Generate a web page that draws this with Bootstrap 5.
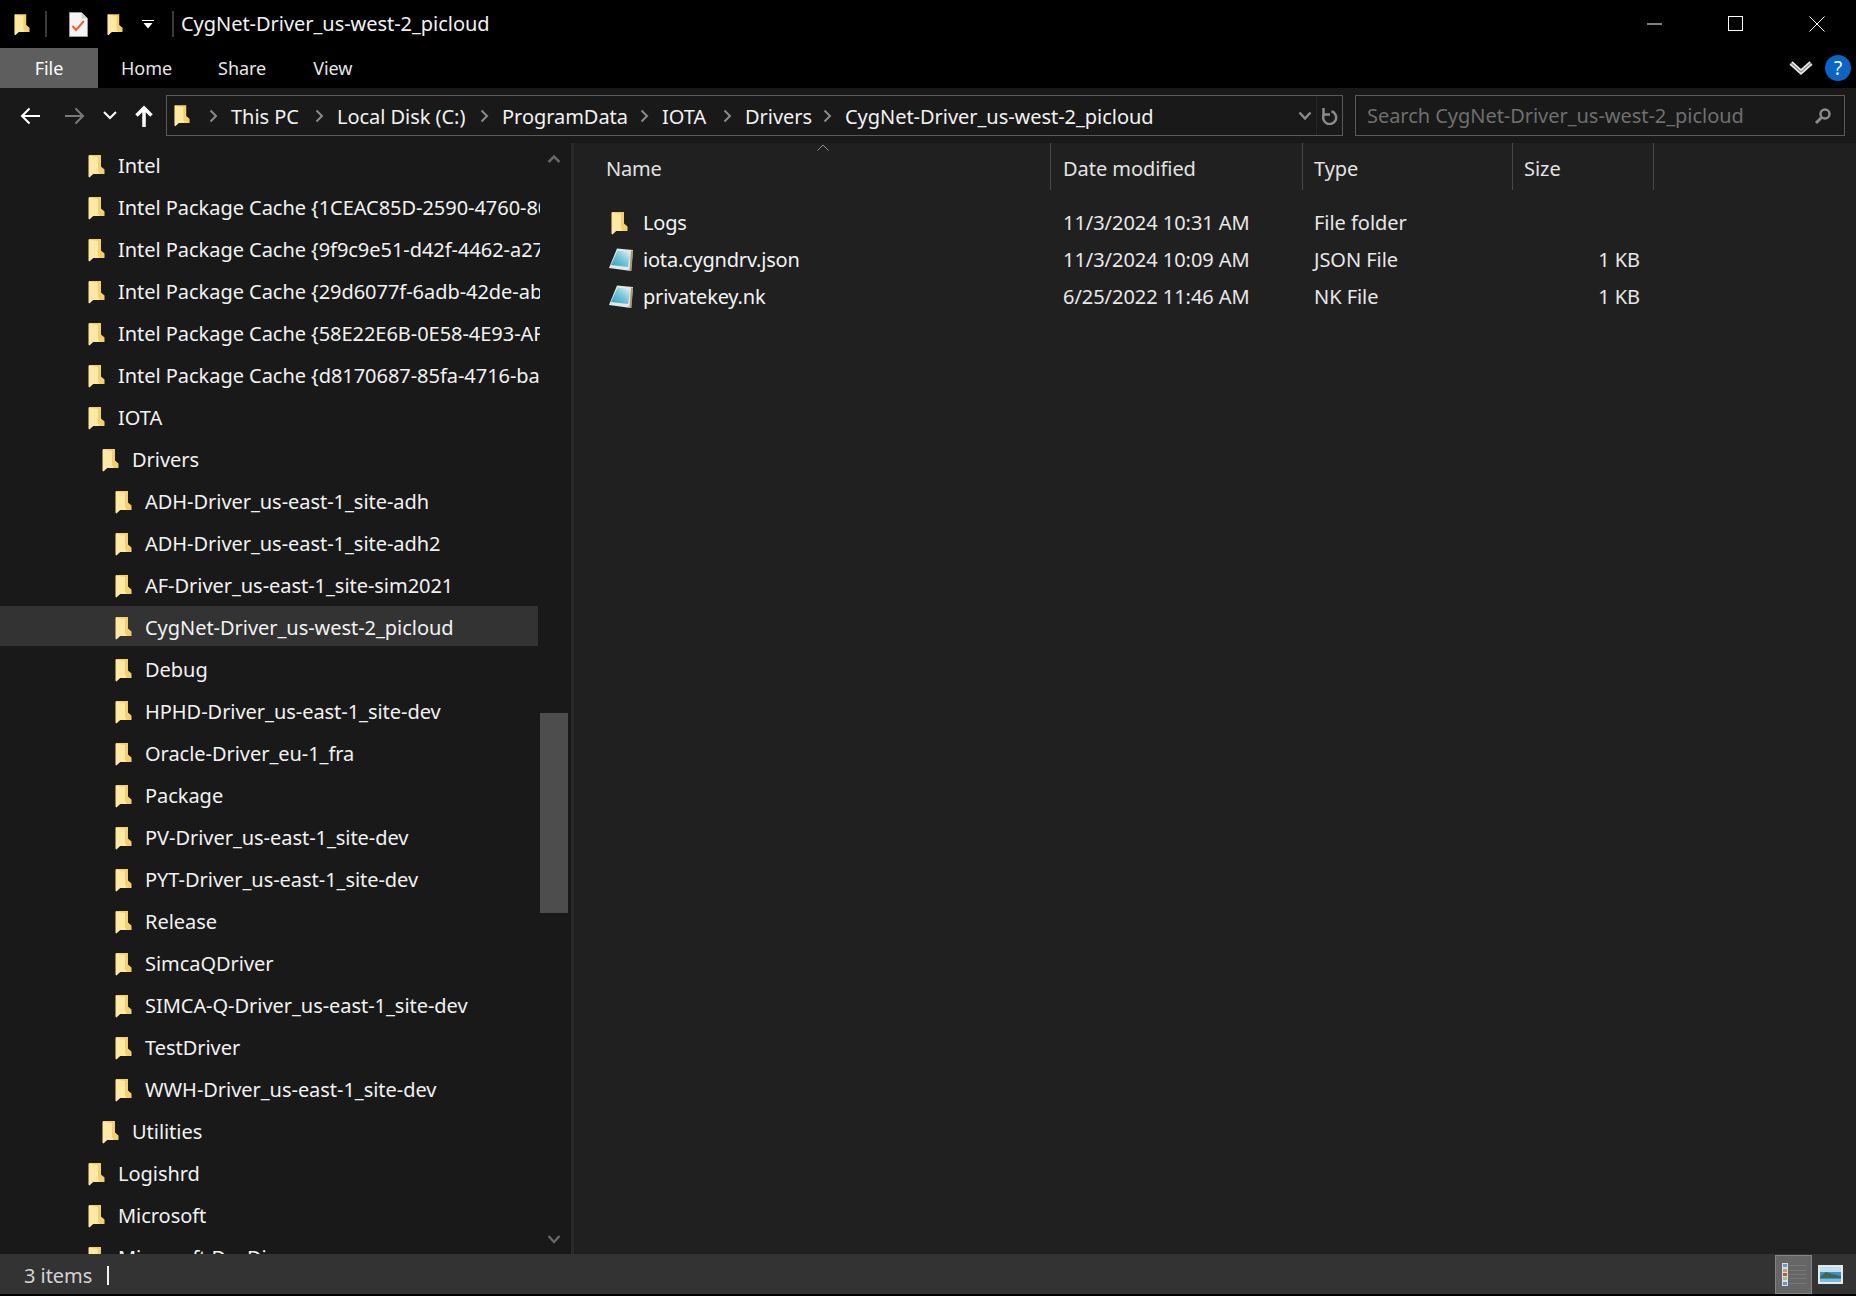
<!DOCTYPE html>
<html lang="en">
<head>
  <meta charset="UTF-8">
  <title>CygNet-Driver_us-west-2_picloud</title>
  <link href="https://cdn.jsdelivr.net/npm/bootstrap@5.3.0/dist/css/bootstrap.min.css" rel="stylesheet">
  <style>
    html, body { height: 100%; background: #000; }
    body { font-family: "Noto Sans", "Open Sans", sans-serif; font-size: 20px; letter-spacing: -0.04px; color: #f2f2f2; overflow: hidden; line-height: 1.2; }
    .win { height: 1294px; }

    /* title bar */
    .title-bar { height: 48px; background: #000; }
    .qa-sep { width: 2px; height: 26px; background: #3a3a3a; }
    .qa-folder { margin-left: 14px; }
    .qa-sep-a { margin-left: 15px; }
    .qa-doc { margin-left: 22px; }
    .qa-folder2 { margin-left: 19px; }
    .qa-drop { margin-left: 19px; }
    .qa-sep-b { margin-left: 18px; }
    .title-text { margin-left: 7px; }
    .win-btn { width: 81px; height: 48px; padding-left: 2px; }

    /* ribbon tabs */
    .tab-bar { height: 40px; background: #000; }
    .rib-tab { height: 40px; padding: 1px 23px 0; font-size: 18px; color: #e6e6e6; }
    .rib-tab.is-file { width: 98px; padding: 1px 0 0; justify-content: center; background: #5e5e5e; color: #fff; }
    .rib-tab.is-view { padding-left: 24px; }
    .help-btn { width: 26px; height: 26px; background: #0c64c4; color: #fff; margin: 0 5px 0 12px; font-size: 19px; }

    /* address row */
    .addr-bar { height: 55px; background: #191919; padding-top: 7px; }
    .nav-btns { width: 166px; height: 41px; }
    .nb-back { margin-left: 20px; }
    .nb-fwd { margin-left: 25px; }
    .nb-drop { margin-left: 18px; }
    .nb-up { margin-left: 18px; }
    .addr-box { width: 1177px; height: 41px; border: 1px solid #5a5a5a; }
    .addr-folder { margin: 0 17px 0 7px; }
    .crumb-sep { width: 9px; margin: 0 13px 0 2px; flex: none; }
    .crumb-txt { white-space: nowrap; color: #f2f2f2; padding-top: 2px; }
    .cr-1 { flex: 0 0 106px; }
    .cr-2 { flex: 0 0 165px; }
    .cr-3 { flex: 0 0 160px; }
    .cr-4 { flex: 0 0 83px; }
    .cr-5 { flex: 0 0 100px; }
    .addr-drop { width: 24px; height: 100%; border-right: 1px solid #252525; }
    .addr-refresh { width: 25px; }
    .search-box { width: 490px; height: 41px; margin-left: 12px; border: 1px solid #5a5a5a; padding: 0 12px 0 11px; color: #6f6f6f; }
    .search-txt { padding-top: 1px; }

    /* tree pane */
    .main-area { height: 1111px; }
    .tree-pane { width: 574px; flex: none; background: #191919; border-right: 3px solid #2a2a2a; }
    .tree-list { width: 540px; padding-top: 1px; gap: 2px; }
    .tree-row { height: 40px; flex: none; white-space: nowrap; overflow: hidden; padding-top: 4px; }
    .tree-row.is-sel { background: #333; margin-right: 2px; }
    .tree-row svg { flex: none; margin-right: 13px; }
    .lvl-0 { padding-left: 88px; }
    .lvl-1 { padding-left: 102px; }
    .lvl-2 { padding-left: 115px; }
    .scroll-col { width: 28px; }
    .scroll-up { top: 11px; }
    .scroll-thumb { height: 200px; margin-top: 570px; background: #4d4d4d; }
    .scroll-end { margin-top: auto; margin-bottom: 8px; }

    /* file list */
    .file-pane { background: #202020; }
    .hcell { height: 47px; border-right: 1px solid #474747; padding-top: 5px; color: #e3e3e3; }
    .c-name { width: 477px; padding-left: 32px; letter-spacing: -0.2px; }
    .c-date { width: 252px; padding-left: 12px; }
    .c-type { width: 210px; padding-left: 11px; }
    .c-size { width: 141px; padding-left: 11px; }
    .sort-mark { top: 1px; left: 243px; }
    .file-rows { margin-top: 14px; }
    .file-row { height: 37px; }
    .file-row .c-size { text-align: right; padding-right: 14px; }
    .file-row > div { color: #e8e8e8; white-space: nowrap; }
    .file-row .c-name { color: #f4f4f4; }
    .fi-folder { margin: 0 15px 0 5px; flex: none; }
    .fi-note { margin: 0 9px 0 2px; flex: none; }

    /* status bar */
    .status-bar { height: 40px; background: #333; padding-left: 24px; color: #d4d4d4; }
    .status-txt { padding-top: 4px; }
    .status-caret { width: 2px; height: 19px; background: #f2f2f2; margin: 2px 0 0 15px; }
    .view-list { width: 37px; height: 39px; background: #666; border: 1px solid #858585; margin-left: auto; }
    .view-pic { width: 44px; padding-left: 6px; }
  </style>
</head>
<body>
<svg width="0" height="0" class="position-absolute">
  <defs>
    <linearGradient id="note-fill" x1="0" y1="1" x2="1" y2="0">
      <stop offset="0" stop-color="#2f9dbd"/>
      <stop offset="0.55" stop-color="#7cc8da"/>
      <stop offset="1" stop-color="#e9f5f8"/>
    </linearGradient>
  </defs>
  <symbol id="ico-folder" viewBox="0 0 17 24">
    <path d="M1 1h12v11.500l3.500 3v4.500H5L1 23z" fill="#f5cf6c"/>
    <path d="M0.500 1.500L10 3v13.500l1.500 3.500H5l-3.500 3.500-1-.8z" fill="#fde8a4"/>
  </symbol>
  <symbol id="ico-note" viewBox="0 0 26 24">
    <path d="M9 .5L25 2 23 23 1 20z" fill="#dfe9ec"/>
    <path d="M9.500 2.500L22.500 4 20 19 3 17z" fill="url(#note-fill)"/>
    <path d="M23 2.500l2 .5-1.500 20-4-1 2-.5z" fill="#a8986a"/>
  </symbol>
</svg>

<div class="win d-flex flex-column">
  <!-- title bar -->
  <div class="title-bar d-flex align-items-center">
    <svg class="qa-folder" width="16" height="23"><use href="#ico-folder"/></svg>
    <span class="qa-sep qa-sep-a"></span>
    <svg class="qa-doc" width="19" height="25" viewBox="0 0 19 25">
      <path d="M0.500 0.500h12l6 6v18h-18z" fill="#f4f4f4" stroke="#9a9a9a"/>
      <path d="M12.500 0.500v6h6z" fill="#cfcfcf"/>
      <path d="M3.500 14l3.500 4 8-9" fill="none" stroke="#e8622c" stroke-width="2"/>
    </svg>
    <svg class="qa-folder2" width="16" height="23"><use href="#ico-folder"/></svg>
    <svg class="qa-drop" width="12" height="9" viewBox="0 0 12 9"><path d="M0 .5h12" stroke="#fff"/><path d="M1.500 3h9L6 8.500z" fill="#fff"/></svg>
    <span class="qa-sep qa-sep-b"></span>
    <span class="title-text">CygNet-Driver_us-west-2_picloud</span>
    <div class="d-flex ms-auto">
      <div class="win-btn d-flex align-items-center justify-content-center"><svg width="16" height="16"><path d="M0 8h15" stroke="#fff"/></svg></div>
      <div class="win-btn d-flex align-items-center justify-content-center"><svg width="16" height="16"><rect x=".5" y=".5" width="14" height="14" fill="none" stroke="#fff"/></svg></div>
      <div class="win-btn d-flex align-items-center justify-content-center"><svg width="16" height="16"><path d="M.5.500l15 15M15.500.500l-15 15" stroke="#fff"/></svg></div>
    </div>
  </div>

  <!-- ribbon tabs -->
  <div class="tab-bar d-flex align-items-center">
    <div class="rib-tab is-file d-flex align-items-center">File</div>
    <div class="rib-tab d-flex align-items-center">Home</div>
    <div class="rib-tab d-flex align-items-center">Share</div>
    <div class="rib-tab is-view d-flex align-items-center">View</div>
    <svg class="ms-auto" width="24" height="16" viewBox="0 0 24 16">
      <path d="M2 3l10 9 10-9" fill="none" stroke="#e8e8e8" stroke-width="4.500"/>
      <path d="M2 3l10 9 10-9" fill="none" stroke="#8d8d8d" stroke-width="1.200"/>
    </svg>
    <div class="help-btn d-flex align-items-center justify-content-center rounded-circle">?</div>
  </div>

  <!-- address row -->
  <div class="addr-bar d-flex">
    <div class="nav-btns d-flex align-items-center">
      <svg class="nb-back" width="20" height="18" viewBox="0 0 20 18"><path d="M20 9H2M9.500 1.500L2 9l7.500 7.500" fill="none" stroke="#fff" stroke-width="2"/></svg>
      <svg class="nb-fwd" width="20" height="18" viewBox="0 0 20 18"><path d="M0 9h18M10.500 1.500L18 9l-7.500 7.500" fill="none" stroke="#7a7a7a" stroke-width="2"/></svg>
      <svg class="nb-drop" width="14" height="9" viewBox="0 0 14 9"><path d="M1 1l6 6 6-6" fill="none" stroke="#fff" stroke-width="2"/></svg>
      <svg class="nb-up" width="18" height="22" viewBox="0 0 18 22"><path d="M9 22V3M1.500 10.500L9 3l7.500 7.500" fill="none" stroke="#fff" stroke-width="3.500"/></svg>
    </div>
    <div class="addr-box d-flex align-items-center">
      <svg class="addr-folder" width="16" height="23"><use href="#ico-folder"/></svg>
      <div class="cr-1 d-flex align-items-center">
        <svg class="crumb-sep" height="14" viewBox="0 0 9 14"><path d="M1.500 1.500L7 7l-5.500 5.500" fill="none" stroke="#8a8a8a" stroke-width="2"/></svg>
        <span class="crumb-txt">This PC</span>
      </div>
      <div class="cr-2 d-flex align-items-center">
        <svg class="crumb-sep" height="14" viewBox="0 0 9 14"><path d="M1.500 1.500L7 7l-5.500 5.500" fill="none" stroke="#8a8a8a" stroke-width="2"/></svg>
        <span class="crumb-txt">Local Disk (C:)</span>
      </div>
      <div class="cr-3 d-flex align-items-center">
        <svg class="crumb-sep" height="14" viewBox="0 0 9 14"><path d="M1.500 1.500L7 7l-5.500 5.500" fill="none" stroke="#8a8a8a" stroke-width="2"/></svg>
        <span class="crumb-txt">ProgramData</span>
      </div>
      <div class="cr-4 d-flex align-items-center">
        <svg class="crumb-sep" height="14" viewBox="0 0 9 14"><path d="M1.500 1.500L7 7l-5.500 5.500" fill="none" stroke="#8a8a8a" stroke-width="2"/></svg>
        <span class="crumb-txt">IOTA</span>
      </div>
      <div class="cr-5 d-flex align-items-center">
        <svg class="crumb-sep" height="14" viewBox="0 0 9 14"><path d="M1.500 1.500L7 7l-5.500 5.500" fill="none" stroke="#8a8a8a" stroke-width="2"/></svg>
        <span class="crumb-txt">Drivers</span>
      </div>
      <div class="d-flex align-items-center">
        <svg class="crumb-sep" height="14" viewBox="0 0 9 14"><path d="M1.500 1.500L7 7l-5.500 5.500" fill="none" stroke="#8a8a8a" stroke-width="2"/></svg>
        <span class="crumb-txt">CygNet-Driver_us-west-2_picloud</span>
      </div>
      <div class="addr-drop d-flex align-items-center justify-content-center ms-auto"><svg width="14" height="10" viewBox="0 0 14 10"><path d="M1.500 1.500L7 7.500l5.500-6" fill="none" stroke="#8a8a8a" stroke-width="2.500"/></svg></div>
      <div class="addr-refresh d-flex align-items-center justify-content-center"><svg width="17" height="18" viewBox="0 0 17 18"><path d="M10.500 4.300A6.500 6.500 0 1 1 3.200 7" fill="none" stroke="#8a8a8a" stroke-width="2.500"/><path d="M2.500 1v6.500H9" fill="none" stroke="#8a8a8a" stroke-width="2.500"/></svg></div>
    </div>
    <div class="search-box d-flex align-items-center justify-content-between">
      <span class="search-txt">Search CygNet-Driver_us-west-2_picloud</span>
      <svg width="18" height="18" viewBox="0 0 18 18"><circle cx="11" cy="7" r="4.500" fill="none" stroke="#8a8a8a" stroke-width="2.500"/><path d="M7.500 10.500L2 16" stroke="#8a8a8a" stroke-width="3"/></svg>
    </div>
  </div>

  <div class="main-area d-flex">
    <!-- tree pane -->
    <div class="tree-pane d-flex">
      <div class="tree-list d-flex flex-column overflow-hidden">
        <div class="tree-row lvl-0 d-flex align-items-center"><svg width="17" height="24"><use href="#ico-folder"/></svg>Intel</div>
        <div class="tree-row lvl-0 d-flex align-items-center"><svg width="17" height="24"><use href="#ico-folder"/></svg>Intel Package Cache {1CEAC85D-2590-4760-80</div>
        <div class="tree-row lvl-0 d-flex align-items-center"><svg width="17" height="24"><use href="#ico-folder"/></svg>Intel Package Cache {9f9c9e51-d42f-4462-a27</div>
        <div class="tree-row lvl-0 d-flex align-items-center"><svg width="17" height="24"><use href="#ico-folder"/></svg>Intel Package Cache {29d6077f-6adb-42de-ab</div>
        <div class="tree-row lvl-0 d-flex align-items-center"><svg width="17" height="24"><use href="#ico-folder"/></svg>Intel Package Cache {58E22E6B-0E58-4E93-AF</div>
        <div class="tree-row lvl-0 d-flex align-items-center"><svg width="17" height="24"><use href="#ico-folder"/></svg>Intel Package Cache {d8170687-85fa-4716-baf</div>
        <div class="tree-row lvl-0 d-flex align-items-center"><svg width="17" height="24"><use href="#ico-folder"/></svg>IOTA</div>
        <div class="tree-row lvl-1 d-flex align-items-center"><svg width="17" height="24"><use href="#ico-folder"/></svg>Drivers</div>
        <div class="tree-row lvl-2 d-flex align-items-center"><svg width="17" height="24"><use href="#ico-folder"/></svg>ADH-Driver_us-east-1_site-adh</div>
        <div class="tree-row lvl-2 d-flex align-items-center"><svg width="17" height="24"><use href="#ico-folder"/></svg>ADH-Driver_us-east-1_site-adh2</div>
        <div class="tree-row lvl-2 d-flex align-items-center"><svg width="17" height="24"><use href="#ico-folder"/></svg>AF-Driver_us-east-1_site-sim2021</div>
        <div class="tree-row is-sel lvl-2 d-flex align-items-center"><svg width="17" height="24"><use href="#ico-folder"/></svg>CygNet-Driver_us-west-2_picloud</div>
        <div class="tree-row lvl-2 d-flex align-items-center"><svg width="17" height="24"><use href="#ico-folder"/></svg>Debug</div>
        <div class="tree-row lvl-2 d-flex align-items-center"><svg width="17" height="24"><use href="#ico-folder"/></svg>HPHD-Driver_us-east-1_site-dev</div>
        <div class="tree-row lvl-2 d-flex align-items-center"><svg width="17" height="24"><use href="#ico-folder"/></svg>Oracle-Driver_eu-1_fra</div>
        <div class="tree-row lvl-2 d-flex align-items-center"><svg width="17" height="24"><use href="#ico-folder"/></svg>Package</div>
        <div class="tree-row lvl-2 d-flex align-items-center"><svg width="17" height="24"><use href="#ico-folder"/></svg>PV-Driver_us-east-1_site-dev</div>
        <div class="tree-row lvl-2 d-flex align-items-center"><svg width="17" height="24"><use href="#ico-folder"/></svg>PYT-Driver_us-east-1_site-dev</div>
        <div class="tree-row lvl-2 d-flex align-items-center"><svg width="17" height="24"><use href="#ico-folder"/></svg>Release</div>
        <div class="tree-row lvl-2 d-flex align-items-center"><svg width="17" height="24"><use href="#ico-folder"/></svg>SimcaQDriver</div>
        <div class="tree-row lvl-2 d-flex align-items-center"><svg width="17" height="24"><use href="#ico-folder"/></svg>SIMCA-Q-Driver_us-east-1_site-dev</div>
        <div class="tree-row lvl-2 d-flex align-items-center"><svg width="17" height="24"><use href="#ico-folder"/></svg>TestDriver</div>
        <div class="tree-row lvl-2 d-flex align-items-center"><svg width="17" height="24"><use href="#ico-folder"/></svg>WWH-Driver_us-east-1_site-dev</div>
        <div class="tree-row lvl-1 d-flex align-items-center"><svg width="17" height="24"><use href="#ico-folder"/></svg>Utilities</div>
        <div class="tree-row lvl-0 d-flex align-items-center"><svg width="17" height="24"><use href="#ico-folder"/></svg>Logishrd</div>
        <div class="tree-row lvl-0 d-flex align-items-center"><svg width="17" height="24"><use href="#ico-folder"/></svg>Microsoft</div>
        <div class="tree-row lvl-0 d-flex align-items-center"><svg width="17" height="24"><use href="#ico-folder"/></svg>Microsoft DevDiv</div>
      </div>
      <div class="scroll-col position-relative d-flex flex-column">
        <svg class="scroll-up position-absolute start-50 translate-middle-x" width="14" height="10" viewBox="0 0 14 10"><path d="M1.500 8L7 2.500 12.500 8" fill="none" stroke="#666" stroke-width="2.500"/></svg>
        <div class="scroll-thumb"></div>
        <svg class="scroll-end align-self-center" width="14" height="12" viewBox="0 0 14 12"><path d="M1.500 2L7 8l5.500-6" fill="none" stroke="#666" stroke-width="2.500"/></svg>
      </div>
    </div>

    <!-- file list -->
    <div class="file-pane flex-grow-1">
      <div class="d-flex position-relative">
        <svg class="sort-mark position-absolute" width="12" height="7" viewBox="0 0 12 7"><path d="M.5 6.500l5.500-5.500 5.500 5.500" fill="none" stroke="#8d8d8d"/></svg>
        <div class="hcell c-name d-flex align-items-center">Name</div>
        <div class="hcell c-date d-flex align-items-center">Date modified</div>
        <div class="hcell c-type d-flex align-items-center">Type</div>
        <div class="hcell c-size d-flex align-items-center">Size</div>
      </div>
      <div class="file-rows">
        <div class="file-row d-flex align-items-center">
          <div class="c-name d-flex align-items-center"><svg class="fi-folder" width="17" height="24"><use href="#ico-folder"/></svg>Logs</div>
          <div class="c-date">11/3/2024 10:31 AM</div>
          <div class="c-type">File folder</div>
          <div class="c-size"></div>
        </div>
        <div class="file-row d-flex align-items-center">
          <div class="c-name d-flex align-items-center"><svg class="fi-note" width="26" height="24"><use href="#ico-note"/></svg>iota.cygndrv.json</div>
          <div class="c-date">11/3/2024 10:09 AM</div>
          <div class="c-type">JSON File</div>
          <div class="c-size">1 KB</div>
        </div>
        <div class="file-row d-flex align-items-center">
          <div class="c-name d-flex align-items-center"><svg class="fi-note" width="26" height="24"><use href="#ico-note"/></svg>privatekey.nk</div>
          <div class="c-date">6/25/2022 11:46 AM</div>
          <div class="c-type">NK File</div>
          <div class="c-size">1 KB</div>
        </div>
      </div>
    </div>
  </div>

  <!-- status bar -->
  <div class="status-bar d-flex align-items-center">
    <span class="status-txt">3 items</span>
    <span class="status-caret"></span>
    <div class="view-list d-flex align-items-center justify-content-center">
      <svg width="24" height="23" viewBox="0 0 24 23">
        <rect x="0" y="0" width="6" height="23" fill="#d8dde0"/>
        <rect x="1" y="1" width="4" height="3" fill="#5b9bd5"/><rect x="1" y="6" width="4" height="3" fill="#b9a36a"/><rect x="1" y="10" width="4" height="3" fill="#c9542e"/><rect x="1" y="14" width="4" height="3" fill="#9ec28a"/><rect x="1" y="19" width="4" height="3" fill="#5b9bd5"/>
        <path d="M7 2.500h17M7 7.500h17M7 11.500h17M7 15.500h17M7 20.500h17" stroke="#777"/>
      </svg>
    </div>
    <div class="view-pic d-flex align-items-center">
      <svg width="25" height="19" viewBox="0 0 25 19">
        <rect width="25" height="19" fill="#e8e8e8"/>
        <rect x="2" y="2" width="21" height="15" fill="#3f8fd0"/>
        <path d="M2 2h21v5H2z" fill="#bfe0f2"/>
        <path d="M2 12l6-5 6 2 9 2v2H2z" fill="#3d6a4c"/>
        <path d="M2 14h21v3H2z" fill="#7cb8df"/>
      </svg>
    </div>
  </div>
</div>

<script src="https://cdn.jsdelivr.net/npm/bootstrap@5.3.0/dist/js/bootstrap.bundle.min.js"></script>
</body>
</html>
